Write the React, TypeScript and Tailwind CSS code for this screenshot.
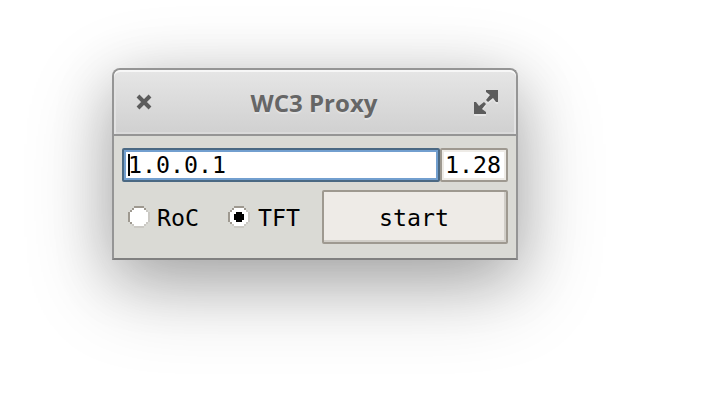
import React from "react";

const mono = "font-['DejaVu_Sans_Mono',monospace] text-[23.25px] leading-none text-black whitespace-pre";

function Radio({ checked }: { checked?: boolean }) {
  return (
    <svg width="22" height="22" viewBox="0 0 11 11" shapeRendering="crispEdges" className="shrink-0">
      <path fill="#fff" d="M3 1h5v1h1v1h1v5H9v1H8v1H3V9H2V8H1V3h1V2h1z" />
      <path fill="#9e9990" d="M3 0h5v1H3zM2 1h1v1H2zM8 1h1v1H8zM1 2h1v1H1zM0 3h1v5H0zM1 8h1v1H1z" />
      <path fill="#cbc9c4" d="M9 2h1v1H9zM10 3h1v5h-1zM9 8h1v1H9zM2 9h1v1H2zM8 9h1v1H8zM3 10h5v1H3z" />
      {checked && <path fill="#000" d="M4 3h3v1h1v3H7v1H4V7H3V4h1z" />}
    </svg>
  );
}

export default function App() {
  return (
    <main className="flex h-[400px] w-[712px] items-start overflow-hidden bg-white pt-[68px] pl-[112px]">
      <section className="flex h-[192px] w-[406px] flex-col overflow-hidden rounded-t-[8px] border-2 border-[#959595] border-b-[#808080] bg-[#dadad5] shadow-[0_26px_88px_rgba(0,0,0,0.24),0_16px_60px_rgba(0,0,0,0.2)]">
        <header className="flex h-[66px] shrink-0 items-center justify-between rounded-t-[6px] border-b-2 border-[#959595] bg-linear-to-b from-[#e6e6e6] to-[#d0d0d0] pr-[18px] pl-[22px] shadow-[inset_0_2px_0_#f7f7f7,inset_2px_0_0_#e2e2e2,inset_-2px_0_0_#e2e2e2,inset_0_-2px_0_#dadada]">
          <svg width="16" height="16" viewBox="0 0 16 16" aria-label="Close">
            <path d="M2 2l12 12M14 2L2 14" stroke="#5c5c5c" strokeWidth="4" />
          </svg>
          <h1 className="pt-px pl-[2px] font-['Open_Sans',sans-serif] text-[24px] leading-none font-bold whitespace-nowrap text-[#666] [text-shadow:0_2px_0_#e2e2e2]">WC3 Proxy</h1>
          <svg width="24" height="26" viewBox="0 0 24 26" aria-label="Maximize" className="mt-[2px]">
            <g fill="#e6e6e6" transform="translate(0 2)">
              <path d="M12 0h12v12h-2l-3-4-5 4-2-2 4-5-4-3z" />
              <path d="M0 12h2l3 4 5-4 2 2-4 5 4 3v2H0z" />
            </g>
            <g fill="#5c5c5c">
              <path d="M12 0h12v12h-2l-3-4-5 4-2-2 4-5-4-3z" />
              <path d="M0 12h2l3 4 5-4 2 2-4 5 4 3v2H0z" />
            </g>
          </svg>
        </header>
        <div className="flex flex-col gap-2 pt-3 pr-2 pl-2">
          <div className="flex h-[34px]">
            <div className="flex w-[318px] items-center rounded-[2px] border-2 border-[#4b6983] bg-white pl-[4px] shadow-[inset_0_0_0_2px_#729fcf]">
              <i className="h-[22px] w-[2px] shrink-0 bg-black" />
              <span className={`${mono} -ml-[2px]`}>1.0.0.1</span>
            </div>
            <div className="flex w-[68px] items-center rounded-[2px] border-2 border-[#9e9990] bg-white pl-[3px] shadow-[inset_0_0_0_2px_#eeebe6]">
              <span className={mono}>1.28</span>
            </div>
          </div>
          <div className="flex h-[54px] items-center">
            <label className="flex w-[100px] items-center gap-[7px] pl-[6px]">
              <Radio />
              <span className={`${mono} pt-px`}>RoC</span>
            </label>
            <label className="flex w-[100px] items-center gap-[8px] pl-[6px]">
              <Radio checked />
              <span className={`${mono} pt-px`}>TFT</span>
            </label>
            <button className={`${mono} h-[54px] w-[186px] rounded-[2px] border-2 border-[#9e9990] bg-[#eeebe7] pt-[2px] pr-[2px] shadow-[inset_-2px_-2px_0_#d1cec8]`}>start</button>
          </div>
        </div>
      </section>
    </main>
  );
}
